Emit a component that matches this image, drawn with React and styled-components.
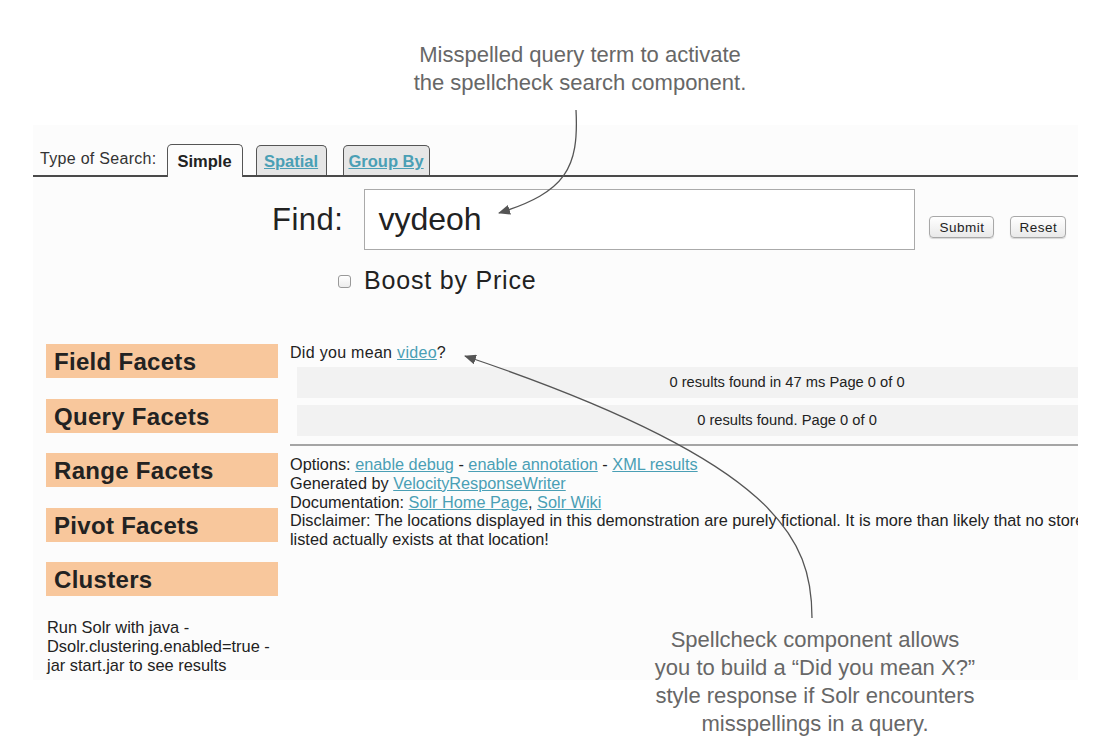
import React from 'react';
import styled, { createGlobalStyle } from 'styled-components';

const GlobalStyle = createGlobalStyle`
    html, body {
        margin: 0;
        padding: 0;
        background: #ffffff;
    }
    body {
        font-family: "Liberation Sans", Arial, Helvetica, sans-serif;
        color: #222;
    }
`;

const facets = ['Field Facets', 'Query Facets', 'Range Facets', 'Pivot Facets', 'Clusters'];

const App = () => {
    return (
        <Page>
            <GlobalStyle />
            <TopNote>
                Misspelled query term to activate<br />
                the spellcheck search component.
            </TopNote>

            <Frame>
                <TabBar>
                    <TabLabel>Type of Search:</TabLabel>
                    <Tab $active $w={76}>Simple</Tab>
                    <Tab $w={71}>Spatial</Tab>
                    <Tab $w={87}>Group By</Tab>
                </TabBar>

                <FindRow>
                    <FindLabel>Find:</FindLabel>
                    <QueryBox>vydeoh</QueryBox>
                    <FormButton $w={65}>Submit</FormButton>
                    <FormButton $w={56}>Reset</FormButton>
                </FindRow>

                <BoostRow>
                    <Check type="checkbox" readOnly />
                    <BoostLabel>Boost by Price</BoostLabel>
                </BoostRow>

                <Content>
                    <Sidebar>
                        <FacetList>
                            {facets.map((f) => (
                                <Facet key={f}>{f}</Facet>
                            ))}
                        </FacetList>
                        <SideNote>
                            Run Solr with java -<br />
                            Dsolr.clustering.enabled=true -<br />
                            jar start.jar to see results
                        </SideNote>
                    </Sidebar>

                    <Main>
                        <Suggest>
                            Did you mean <Link>video</Link>?
                        </Suggest>
                        <ResultBar>0 results found in 47 ms Page 0 of 0</ResultBar>
                        <ResultBar>0 results found. Page 0 of 0</ResultBar>
                        <Rule />
                        <Footer>
                            <div>
                                Options: <Link>enable debug</Link> - <Link>enable annotation</Link> - <Link>XML results</Link>
                            </div>
                            <div>
                                Generated by <Link>VelocityResponseWriter</Link>
                            </div>
                            <div>
                                Documentation: <Link>Solr Home Page</Link>, <Link>Solr Wiki</Link>
                            </div>
                            <div>
                                Disclaimer: The locations displayed in this demonstration are purely fictional. It is more than likely that no store<br />
                                listed actually exists at that location!
                            </div>
                        </Footer>
                    </Main>
                </Content>
            </Frame>

            <BottomNote>
                Spellcheck component allows<br />
                you to build a “Did you mean X?”<br />
                style response if Solr encounters<br />
                misspellings in a query.
            </BottomNote>

            {/* callout arrows drawn over the screenshot */}
            <Arrows viewBox="0 0 1110 756" width="1110" height="756">
                <defs>
                    <marker id="head" markerWidth="12" markerHeight="10" refX="11" refY="5" orient="auto" markerUnits="userSpaceOnUse">
                        <path d="M0 0 L12 5 L0 10 Z" fill="#555" />
                    </marker>
                </defs>
                <path d="M576 110 C 579 168, 566 192, 499 213" fill="none" stroke="#555" strokeWidth="1.3" markerEnd="url(#head)" />
                <path d="M812 618 C 812 540, 780 462, 465 356" fill="none" stroke="#555" strokeWidth="1.3" markerEnd="url(#head)" />
            </Arrows>
        </Page>
    );
};

const Page = styled.div`
    position: relative;
    width: 1110px;
    height: 756px;
    overflow: hidden;
`;

const TopNote = styled.div`
    width: 400px;
    margin-left: 380px;
    padding-top: 41px;
    text-align: center;
    font-size: 22px;
    line-height: 28px;
    color: #676767;
`;

const Frame = styled.div`
    margin-top: 28px;
    margin-left: 33px;
    width: 1045px;
    height: 555px;
    background: #fcfcfc;
    overflow: hidden;
`;

const TabBar = styled.div`
    display: flex;
    align-items: flex-end;
    height: 32px;
    padding: 18px 0 0 7px;
    border-bottom: 2px solid #4a4a4a;
`;

const TabLabel = styled.span`
    font-size: 16px;
    letter-spacing: 0.3px;
    color: #333;
    margin-bottom: 7px;
    margin-right: 10px;
`;

const Tab = styled.span`
    display: flex;
    align-items: center;
    justify-content: center;
    width: ${(p) => p.$w}px;
    height: ${(p) => (p.$active ? '33px' : '30px')};
    margin-bottom: ${(p) => (p.$active ? '-2px' : '0')};
    margin-right: ${(p) => (p.$active ? '13px' : '16px')};
    border: 1.5px solid #555;
    border-bottom: none;
    border-radius: 5px 5px 0 0;
    background: ${(p) => (p.$active ? '#fcfcfc' : '#e6e6e6')};
    font-size: 16.5px;
    font-weight: bold;
    color: ${(p) => (p.$active ? '#222' : '#4a9fb5')};
    text-decoration: ${(p) => (p.$active ? 'none' : 'underline')};
    padding-top: ${(p) => (p.$active ? '0' : '2px')};
    box-sizing: border-box;
`;

const FindRow = styled.div`
    display: flex;
    align-items: flex-start;
    margin-top: 12px;
    padding-left: 239px;
`;

const FindLabel = styled.span`
    font-size: 31px;
    line-height: 61px;
    color: #222;
    margin-right: 21px;
    letter-spacing: 0.5px;
`;

const QueryBox = styled.div`
    width: 551px;
    height: 61px;
    box-sizing: border-box;
    border: 1px solid #aaa;
    background: #fff;
    padding-left: 13px;
    font-size: 32px;
    line-height: 59px;
    color: #222;
`;

const FormButton = styled.button`
    width: ${(p) => p.$w}px;
    margin-top: 27px;
    margin-left: 14px;
    height: 22px;
    padding: 0;
    border: 1px solid #a8a8a8;
    border-radius: 4px;
    background: linear-gradient(#ffffff, #e9e9e9);
    box-shadow: 0 1px 1px rgba(0, 0, 0, 0.15);
    font-family: "Liberation Sans", Arial, sans-serif;
    font-size: 13.5px;
    letter-spacing: 0.5px;
    color: #222;

    & + & {
        margin-left: 16px;
    }
`;

const BoostRow = styled.div`
    display: flex;
    align-items: center;
    margin-top: 15px;
    padding-left: 305px;
    height: 30px;
`;

const Check = styled.input`
    appearance: none;
    width: 13px;
    height: 13px;
    margin: 2px 0 0 0;
    border: 1px solid #999;
    border-radius: 3px;
    background: linear-gradient(#fff, #ececec);
`;

const BoostLabel = styled.span`
    margin-left: 13px;
    font-size: 25px;
    letter-spacing: 0.8px;
    color: #222;
`;

const Content = styled.div`
    display: flex;
    margin-top: 49px;
`;

const Sidebar = styled.div`
    flex: none;
    width: 232px;
    margin-left: 13px;
    margin-right: 12px;
`;

const FacetList = styled.div`
    display: flex;
    flex-direction: column;
    gap: 20.5px;
`;

const Facet = styled.div`
    height: 34px;
    line-height: 35px;
    padding-left: 8px;
    background: #f8c79c;
    font-size: 24px;
    font-weight: bold;
    letter-spacing: 0.3px;
    color: #222;
`;

const SideNote = styled.div`
    margin-top: 22px;
    padding-left: 1px;
    font-size: 16.4px;
    line-height: 19px;
    color: #222;
`;

const Main = styled.div`
    flex: none;
    width: 1000px;
`;

const Suggest = styled.div`
    font-size: 16px;
    letter-spacing: 0.3px;
    line-height: 18px;
    color: #222;
`;

const Link = styled.span`
    color: #4a9fb5;
    text-decoration: underline;
`;

const ResultBar = styled.div`
    width: 980px;
    height: 31px;
    margin: 5px 0 0 7px;
    background: #f2f2f2;
    text-align: center;
    font-size: 14.7px;
    line-height: 31px;
    color: #222;

    & + & {
        margin-top: 7px;
    }
`;

const Rule = styled.div`
    margin-top: 8px;
    border-top: 2px solid #a5a5a5;
`;

const Footer = styled.div`
    margin-top: 9px;
    font-size: 16.3px;
    line-height: 18.8px;
    color: #222;
    white-space: nowrap;
`;

const BottomNote = styled.div`
    position: absolute;
    left: 615px;
    top: 626px;
    width: 400px;
    text-align: center;
    font-size: 22px;
    line-height: 28px;
    color: #676767;
`;

const Arrows = styled.svg`
    position: absolute;
    left: 0;
    top: 0;
    pointer-events: none;
`;

export default App;
